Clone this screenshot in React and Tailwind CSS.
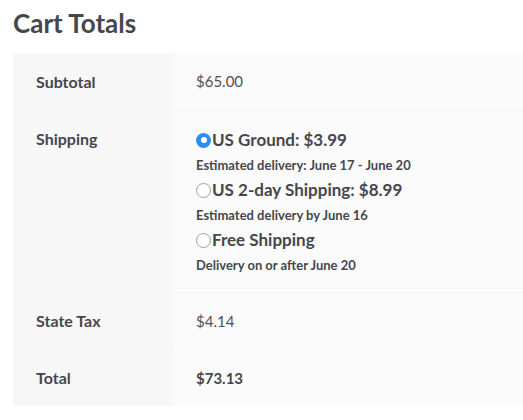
import React, { useState } from "react";

const options = [
  { id: "ground", label: "US Ground: $3.99", note: "Estimated delivery: June 17 - June 20" },
  { id: "2day", label: "US 2-day Shipping: $8.99", note: "Estimated delivery by June 16" },
  { id: "free", label: "Free Shipping", note: "Delivery on or after June 20" },
];

const Radio = ({ checked }) =>
  checked ? (
    <span className="w-[15px] h-[15px] rounded-full bg-[#2f8cf0] flex items-center justify-center shrink-0">
      <span className="w-[6px] h-[6px] rounded-full bg-white" />
    </span>
  ) : (
    <span className="w-[15px] h-[15px] rounded-full border border-[#a0a0a0] bg-white shrink-0" />
  );

const App = () => {
  const [shipping, setShipping] = useState("ground");

  return (
    <div
      className="w-[523px] h-[420px] bg-white pl-[13px] text-[#46474b]"
      style={{ fontFamily: "Lato, 'Noto Sans', sans-serif" }}
    >
      {/* Heading */}
      <h2 className="text-[26px] font-bold leading-none pt-[10px] h-[53px]">
        Cart Totals
      </h2>

      {/* Table */}
      <div className="grid grid-cols-[160px_1fr]">
        <div className="bg-[#f7f7f7] h-[57px] pl-[23px] flex items-center text-[16px] font-bold">
          Subtotal
        </div>
        <div className="bg-[#fbfbfb] h-[57px] pl-[23px] flex items-center text-[15px] text-[#505155]">
          $65.00
        </div>

        <div className="bg-[#f7f7f7] h-[182px] pl-[23px] pt-[17px] text-[16px] font-bold">
          Shipping
        </div>
        <div className="bg-[#fbfbfb] h-[182px] pl-[23px] pt-[17px] border-t border-[#f6f6f6]">
          {options.map((o) => (
            <div key={o.id}>
              <label
                className="flex items-center h-[24px] text-[17px] font-bold cursor-pointer"
                onClick={() => setShipping(o.id)}
              >
                <Radio checked={shipping === o.id} />
                <span className="ml-[1px]">{o.label}</span>
              </label>
              <p className="h-[26px] pt-[1px] flex items-center text-[13px] font-bold">{o.note}</p>
            </div>
          ))}
        </div>

        <div className="bg-[#f7f7f7] h-[57px] pl-[23px] flex items-center text-[16px] font-bold">
          State Tax
        </div>
        <div className="bg-[#fbfbfb] h-[57px] pl-[23px] flex items-center text-[15px] text-[#505155] border-t border-[#f6f6f6]">
          $4.14
        </div>

        <div className="bg-[#f7f7f7] h-[57px] pl-[23px] flex items-center text-[16px] font-bold">
          Total
        </div>
        <div className="bg-[#fbfbfb] h-[57px] pl-[23px] flex items-center text-[15px] font-bold border-t border-[#f6f6f6]">
          $73.13
        </div>
      </div>
    </div>
  );
};

export default App;
